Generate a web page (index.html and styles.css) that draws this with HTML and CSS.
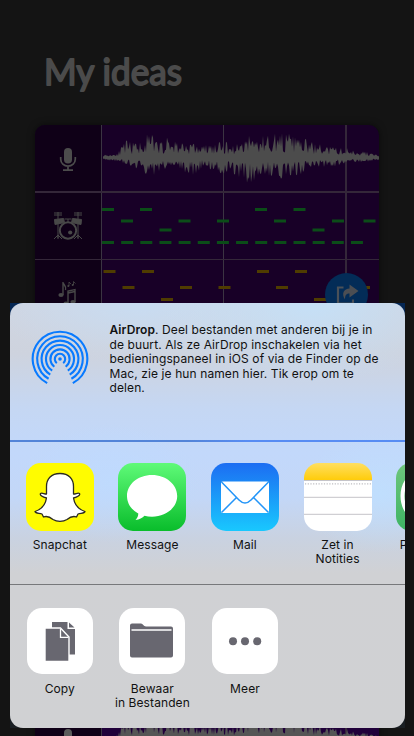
FILE: index.html
```html
<!DOCTYPE html>
<html lang="nl">
<head>
<meta charset="utf-8">
<meta name="viewport" content="width=device-width">
<title>My ideas</title>
<link rel="stylesheet" href="styles.css">
</head>
<body>
<div class="screen">
  <main class="ideas">
    <svg class="heading" width="170" height="60" role="heading" aria-level="1"><text x="0" y="35" textLength="138" lengthAdjust="spacingAndGlyphs">My ideas</text></svg>
    <section class="idea">
      <div class="track voice">
        <div class="instrument"><svg width="18" height="26" viewBox="0 0 18 26"><rect x="5" y="1" width="8" height="15.500" rx="4" fill="#4c4c4c"/><path d="M1.700 10v2.200a7.300 7 0 0 0 14.600 0V10M9 19v4M4 23.200h10" fill="none" stroke="#4c4c4c" stroke-width="1.700"/></svg></div>
        <svg class="lane" width="278" height="66"><path class="wave"/></svg>
      </div>
      <div class="track drums">
        <div class="instrument"><svg width="30" height="30" viewBox="0 0 30 30" fill="none" stroke="#484848" stroke-width="1"><path d="M1 2h8M21 2h8M1 4h8M21 4h8M5 1v26M25 1v26M11.500 8h7M15 8v4M5 24l-4 4M5 24v4M5 24l4 4M25 24l-4 4M25 24v4M25 24l4 4"/><path d="M1.500 8.500l9-1 1 4-9.500 2zM28.500 8.500l-9-1-1 4 9.500 2z" fill="#484848"/><circle cx="15" cy="19.500" r="8.200" stroke-width="2"/><circle cx="17.200" cy="21.500" r="2.100" fill="#484848" stroke="none"/></svg></div>
        <svg class="lane notes-green" width="278" height="66"></svg>
      </div>
      <div class="track melody">
        <div class="instrument"><svg width="20" height="28" viewBox="0 0 20 28"><g fill="none" stroke="#484848" stroke-width="1.400"><path d="M5 15V2c.5 3.500 4 4 2.500 8M10 23V11l7-1.500V22M10 13l7-1.500"/><path stroke-width=".8" d="M11 6V2l2 2M15.500 5V1.500l2 2"/></g><g fill="#484848"><ellipse cx="3" cy="15" rx="2.600" ry="2"/><ellipse cx="8" cy="23.500" rx="2.600" ry="2"/><ellipse cx="15" cy="22" rx="2.600" ry="2"/><circle cx="10.300" cy="6" r="1"/><circle cx="14.700" cy="5" r="1"/></g></svg></div>
        <svg class="lane notes-gold" width="278" height="66"></svg>
      </div>
      <div class="share"><svg width="24" height="24" viewBox="0 0 24 24"><path d="M8.500 4.500H3v16h15v-4" fill="none" stroke="#4b5158" stroke-width="2.200"/><path d="M14.500 1.500L23.500 8l-9 6.500v-4c-3 0-4.500 1.500-4.500 6-4-6-1-11 4.500-11z" fill="#4b4e53"/></svg></div>
    </section>
    <section class="idea next">
      <div class="track voice">
        <div class="instrument"><svg width="18" height="26" viewBox="0 0 18 26"><rect x="5" y="1" width="8" height="15.500" rx="4" fill="#5b5b5b"/></svg></div>
        <svg class="lane" width="278" height="66"><path class="wave"/></svg>
      </div>
    </section>
  </main>

  <div class="sheet-frame">
  <div class="sheet">
    <section class="airdrop">
      <svg class="airdrop-icon" width="58" height="58" viewBox="-29 -29 58 58" fill="none" stroke="#087aff" stroke-width="2.100"><circle r="1.800" fill="#087aff" stroke="none"/><g class="rings"></g></svg>
      <p class="airdrop-text"><b>AirDrop</b>. Deel bestanden met anderen bij je in<br>de buurt. Als ze AirDrop inschakelen via het<br>bedieningspaneel in iOS of via de Finder op de<br>Mac, zie je hun namen hier. Tik erop om te<br>delen.</p>
    </section>
    <section class="row apps">
      <div class="item">
        <div class="icon snapchat"><svg width="68" height="68" viewBox="0 0 68 68"><path d="M34 10.500C25 10.500 20.500 16 20.500 23.500V31C18 31 16 29.500 14.500 30.500 13.500 32 16.500 34 20.500 35 19.500 41.500 15 46.500 9 48.500 9.500 50.500 13 50 16 51L17.500 54C21.500 52.500 24 54 27 56.500 31 59 37 59 41 56.500 44 54 46.500 52.500 50.500 54L52 51C55 50 58.500 50.500 59 48.500 53 46.500 48.500 41.500 47.500 35 51.500 34 54.500 32 53.500 30.500 52 29.500 50 31 47.500 31V23.500C47.500 16 43 10.500 34 10.500z" fill="#fff" stroke="#2b2b20" stroke-width="1.300" stroke-linejoin="round"/></svg></div>
        <span>Snapchat</span>
      </div>
      <div class="item">
        <div class="icon message"><svg width="68" height="68" viewBox="0 0 68 68"><path d="M34 12C20 12 9 21.300 9 33c0 7.500 4.500 14 11.300 17.500 0 2.500-1 4.500-2.800 6.500 3.800-.3 7-2 9-4.200 2.300.6 4.800.9 7.500.9 14 0 25.200-9.200 25.200-20.700S48 12 34 12z" fill="#fff"/></svg></div>
        <span>Message</span>
      </div>
      <div class="item">
        <div class="icon mail"><svg width="68" height="68" viewBox="0 0 68 68"><rect x="10" y="18.500" width="48" height="31.500" rx="1.500" fill="#fff"/><path d="M10.500 19L28 37q6 6 12 0l17.500-18M10.500 49.500L25.500 34.500M57.500 49.500L42.500 34.500" fill="none" stroke="#2495f8" stroke-width="1.500"/></svg></div>
        <span>Mail</span>
      </div>
      <div class="item">
        <div class="icon notes"><svg width="68" height="68" viewBox="0 0 68 68"><path d="M0 17.500h68M0 34.300h68M0 51.300h68" stroke="#c5c4c9"/><path d="M1 20.800h67" stroke="#bdbdc1" stroke-width="1.200" stroke-dasharray="1.200 1.500"/></svg></div>
        <span>Zet in<br>Notities</span>
      </div>
      <div class="item">
        <div class="icon whatsapp"><svg width="68" height="68" viewBox="0 0 68 68"><circle cx="35" cy="33" r="28.500" fill="none" stroke="#fff" stroke-width="4"/></svg></div>
        <span class="partial">P</span>
      </div>
    </section>
    <section class="row actions">
      <div class="item">
        <div class="icon action"><svg width="66" height="66" viewBox="0 0 66 66" fill="#686770"><path d="M25 14h15.500v7H48v25.500H25zM42 14.500l5.500 5H42z"/><path d="M18 20h15.500l8.500 9v24.500H18z" stroke="#fff" stroke-width="1.400"/><path d="M33.500 21v8.300h8" fill="none" stroke="#fff" stroke-width="1.300"/></svg></div>
        <span>Copy</span>
      </div>
      <div class="item">
        <div class="icon action"><svg width="66" height="66" viewBox="0 0 66 66"><path d="M13 15.500h9c2 0 2.500 3 5 3h25q2 0 2 2v27q0 2-2 2H13q-2 0-2-2v-30q0-2 2-2z" fill="#686770"/><path d="M12.500 22h40" stroke="#fff" stroke-width="1.700"/></svg></div>
        <span>Bewaar<br>in Bestanden</span>
      </div>
      <div class="item">
        <div class="icon action"><svg width="66" height="66" viewBox="0 0 66 66" fill="#686770"><circle cx="21" cy="33.300" r="4"/><circle cx="33" cy="33.300" r="4"/><circle cx="45.200" cy="33.300" r="4"/></svg></div>
        <span>Meer</span>
      </div>
    </section>
  </div>
  </div>
</div>
<script src="script.js"></script>
</body>
</html>
```

FILE: styles.css
```css
* { box-sizing: border-box; }
body { margin: 0; background: #141414; font-family: Inter, "Liberation Sans", sans-serif; }
.screen { position: relative; width: 414px; height: 736px; overflow: hidden; background: #141414; }
.ideas { padding: 50px 35px 0; }
.heading { display: block; margin-left: 9px; overflow: visible; font: 400 36px Lato, "Open Sans", sans-serif; }
.heading text { fill: #4b4b4b; stroke: #4b4b4b; stroke-width: 1.8px; stroke-linejoin: round; }
.idea { position: relative; width: 344px; height: 262px; margin-top: 15px; border-radius: 10px; overflow: hidden; background: #180027; box-shadow: 0 0 7px #0008; }
.idea.next { height: 80px; margin-top: 319px; background: #20003a; }
.track { display: flex; height: 68px; border-bottom: 2px solid #342739; }
.drums { height: 67px; border-bottom-width: 1px; }
.instrument { display: flex; align-items: center; justify-content: center; width: 67px; background: #0f0017; border-right: 1px solid #3b3442; }
.melody .instrument { align-items: flex-start; padding-top: 20px; }
.voice .instrument { padding-top: 4px; }
.lane { flex: none; width: 277px; background: linear-gradient(90deg, transparent 121px, #3b3442 121px 122px, transparent 122px 243px, #342739 243px 245px, transparent 245px); }
.wave { fill: #4c4c4c; }
.next .wave { fill: #555; }
.notes-green { fill: #0b4d18; }
.notes-gold { fill: #4f3c00; }
.share { position: absolute; left: 290px; top: 148px; display: flex; align-items: center; justify-content: center; width: 43px; height: 43px; border-radius: 50%; background: #032c57; }
.sheet-frame { position: absolute; left: 10px; top: 303px; width: 395px; height: 425px; background: linear-gradient(#052754, #1a1f23); }
.sheet { height: 425px; border-radius: 13px; overflow: hidden; color: #111;
  background:
    radial-gradient(ellipse 150px 80px at 300px 0, #c5e0f7, transparent),
    radial-gradient(ellipse 150px 60px at 130px 0, #c8dcf2, transparent),
    radial-gradient(ellipse 90px 60px at 100px 180px, #bedbffcc, transparent),
    radial-gradient(ellipse 80px 60px at 370px 190px, #bfe0ffcc, transparent),
    linear-gradient(#d0d6e2 0, #ced3de 50px, #c5d7f3 105px, #c2d8fb 150px, #c3d7f7 195px, #c9d2e1 235px, #d0d1d4 270px, #d0d1d3 100%); }
.airdrop { display: flex; height: 139px; padding: 20px 0 0 21px; border-bottom: 2px solid #5287e6; border-image: linear-gradient(90deg, #5384d8, #5384d8 45%, #588cf3 60%) 1; }
.airdrop-icon { margin-top: 7px; }
.airdrop-text { margin: 0 0 0 20.500px; font-size: 12px; line-height: 14.500px; letter-spacing: .1px; white-space: nowrap; }
.airdrop-text b { font-weight: 600; }
.row { display: flex; }
.apps { height: 143px; padding: 20.500px 0 0 3.500px; border-bottom: 1px solid #77787b; }
.actions { padding: 22.500px 0 0 3.500px; }
.item { flex: 0 0 92.600px; display: flex; flex-direction: column; align-items: center; text-align: center; font-size: 12px; line-height: 14.300px; letter-spacing: .1px; white-space: nowrap; }
.icon { width: 68px; height: 68px; margin-bottom: 7.500px; border-radius: 15px; overflow: hidden; }
.icon svg { display: block; }
.snapchat { background: #fffc00; }
.message { background: linear-gradient(#5ffa78, #09bd2b); }
.mail { background: linear-gradient(#1c6df2, #19c8fe); }
.notes { background: linear-gradient(#ffdf61, #ffcc0a 17px, #fff 17px); }
.whatsapp { background: linear-gradient(#6fc67d, #3db463); }
.partial { margin-right: 53px; }
.action { width: 66px; height: 66px; margin-bottom: 8.500px; background: #fff; }
```

FILE: script.js
```js
const NS = "http://www.w3.org/2000/svg";

// Envelope of the recording: [x, amplitude above, amplitude below]
const envelope = [[0,2,2],[5,3,3],[10,3,3],[16,5,4],[24,16,7],[34,14,10],[48,24,18],[56,15,16],[68,20,11],[78,16,11],[88,15,19],[100,12,10],[122,15,17],[134,13,17],[145,24,25],[158,20,20],[166,24,18],[178,24,26],[196,21,17],[212,14,10],[230,10,9],[246,9,5],[262,6,4],[277,2,3]];
let seed = 11;
const random = () => (seed = (seed * 16807) % 2147483647) / 2147483647;
function amplitude(x, side) {
  let i = 0;
  while (i < envelope.length - 2 && envelope[i + 1][0] < x) i++;
  const a = envelope[i], b = envelope[i + 1];
  return a[side] + (b[side] - a[side]) * (x - a[0]) / (b[0] - a[0]);
}
const upper = [], lower = [];
for (let x = 1; x <= 277; x += 1) {
  upper.push(`${x},${(32 - amplitude(x, 1) * (0.2 + 0.85 * random() ** 1.3)).toFixed(1)}`);
  lower.unshift(`${x},${(33 + amplitude(x, 2) * (0.2 + 0.85 * random() ** 1.3)).toFixed(1)}`);
}
document.querySelectorAll(".wave").forEach(p => p.setAttribute("d", "M" + upper.concat(lower).join("L") + "z"));

function notes(selector, list) {
  const lane = document.querySelector(selector);
  list.forEach(([x, y]) => {
    const r = document.createElementNS(NS, "rect");
    r.setAttribute("x", x); r.setAttribute("y", y);
    r.setAttribute("width", 12); r.setAttribute("height", 3);
    lane.append(r);
  });
}
const green = [[0,15],[38,15],[153,15],[191.5,15],[19,26.5],[76.5,26.5],[115,26.5],[172,26.5],[230,26.5],[261.500,26.5],[57.500,35.5],[210.500,35.5]];
for (let i = 0; i < 14; i++) green.push([i * 19.150, 48]);
notes(".notes-green", green);
notes(".notes-gold", [[1.500,10],[40,10],[155,10],[193,10],[20.500,26],[78,26],[116.500,26],[174,26],[256,26],[59,38],[212,38]]);

// Concentric rings, each open at the bottom
const rings = document.querySelector(".rings");
[5.2, 9.6, 14, 18.400, 22.800, 27.300].forEach((r, i) => {
  const half = (28 + (5 - i) * 2) * Math.PI / 180;
  const x = r * Math.sin(half), y = r * Math.cos(half);
  const p = document.createElementNS(NS, "path");
  p.setAttribute("d", `M${-x} ${y}A${r} ${r} 0 1 1 ${x} ${y}`);
  rings.append(p);
});
```
